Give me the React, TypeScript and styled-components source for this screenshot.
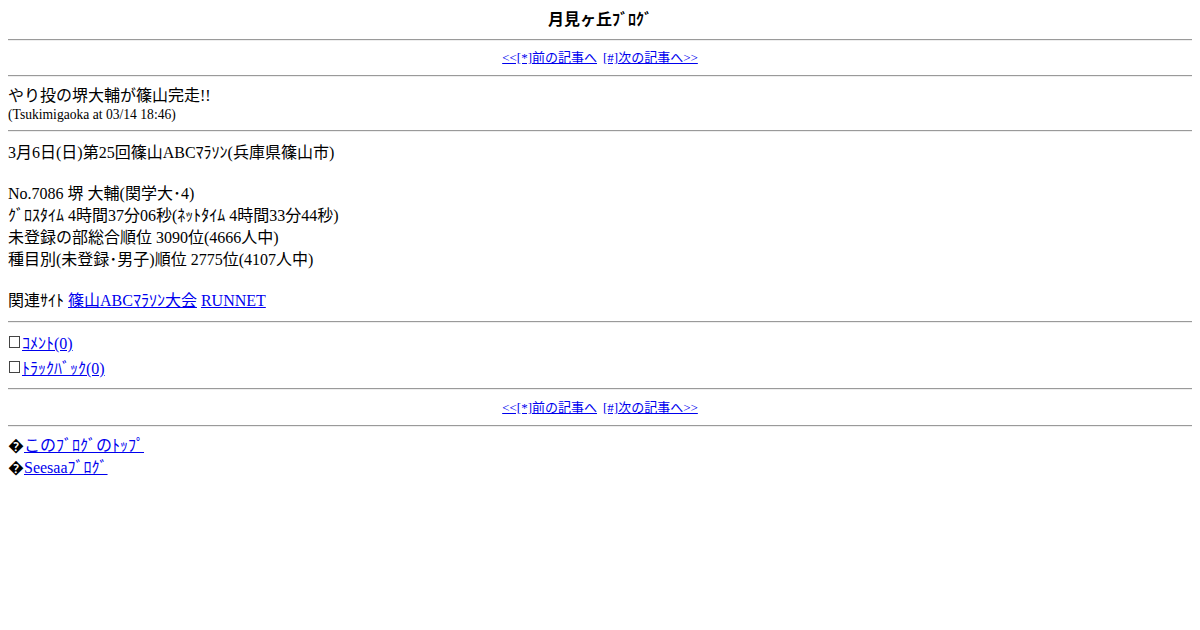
import React from 'react';
import styled, { createGlobalStyle } from 'styled-components';

const GlobalStyle = createGlobalStyle`
  body {
    margin: 8px;
    background: #fff;
    color: #000;
    font-family: "Liberation Serif", "Noto Sans CJK JP", serif;
    font-size: 16px;
  }
  a {
    color: #0000ee;
  }
`;

const BlogTitle = styled.div`
  text-align: center;
  font-weight: bold;
  line-height: 23px;
`;

const Rule = styled.hr`
  margin: 8px 0;
  border: none;
  border-top: 1px solid #9a9a9a;
  border-bottom: 1px solid #eeeeee;
`;

const Pager = styled.div<{ $tall?: boolean }>`
  text-align: center;
  font-size: 13px;
  line-height: ${(p) => (p.$tall ? '19px' : '18px')};

  a + a {
    margin-left: 6px;
  }
`;

const EntryTitle = styled.div`
  font-size: 16px;
  line-height: 22px;
`;

const EntryMeta = styled.div`
  font-size: 13.6px;
  line-height: 15px;
`;

const Body = styled.div`
  line-height: 22px;
`;

const Lead = styled.div`
  line-height: 25px;
`;

const Gap = styled.div<{ $h: number }>`
  height: ${(p) => p.$h}px;
`;

const FeedbackList = styled.div`
  display: flex;
  flex-direction: column;
  gap: 3px;
  padding-bottom: 2px;
`;

const FeedbackRow = styled.div`
  display: flex;
  align-items: center;
  height: 22px;
`;

const Box = styled.span`
  display: inline-block;
  width: 9px;
  height: 10px;
  border: 1px solid #444;
  margin: 0 2px 0 1px;
`;

const Footer = styled.div`
  display: flex;
  flex-direction: column;
  gap: 1px;
  line-height: 21px;
`;

const Nav = ({ tall }: { tall?: boolean }) => (
  <Pager $tall={tall}>
    <a href="#">&lt;&lt;[*]前の記事へ</a>
    <a href="#">[#]次の記事へ&gt;&gt;</a>
  </Pager>
);

export default function App() {
  return (
    <>
      <GlobalStyle />
      <BlogTitle>月見ヶ丘ﾌﾞﾛｸﾞ</BlogTitle>
      <Rule />
      <Nav />
      <Rule />
      <EntryTitle>やり投の堺大輔が篠山完走!!</EntryTitle>
      <EntryMeta>(Tsukimigaoka at 03/14 18:46)</EntryMeta>
      <Rule />
      <Body>
        <Lead>3月6日(日)第25回篠山ABCﾏﾗｿﾝ(兵庫県篠山市)</Lead>
        <Gap $h={18} />
        <div>No.7086 堺 大輔(関学大･4)</div>
        <div>ｸﾞﾛｽﾀｲﾑ 4時間37分06秒(ﾈｯﾄﾀｲﾑ 4時間33分44秒)</div>
        <div>未登録の部総合順位 3090位(4666人中)</div>
        <div>種目別(未登録･男子)順位 2775位(4107人中)</div>
        <Gap $h={19} />
        <div>
          関連ｻｲﾄ <a href="#">篠山ABCﾏﾗｿﾝ大会</a> <a href="#">RUNNET</a>
        </div>
        <Gap $h={1} />
      </Body>
      <Rule />
      <FeedbackList>
        <FeedbackRow>
          <Box />
          <a href="#">ｺﾒﾝﾄ(0)</a>
        </FeedbackRow>
        <FeedbackRow>
          <Box />
          <a href="#">ﾄﾗｯｸﾊﾞｯｸ(0)</a>
        </FeedbackRow>
      </FeedbackList>
      <Rule />
      <Nav tall />
      <Rule />
      <Footer>
        <div>
          {'\uFFFD'}
          <a href="#">このﾌﾞﾛｸﾞのﾄｯﾌﾟ</a>
        </div>
        <div>
          {'\uFFFD'}
          <a href="#">Seesaaﾌﾞﾛｸﾞ</a>
        </div>
      </Footer>
    </>
  );
}
